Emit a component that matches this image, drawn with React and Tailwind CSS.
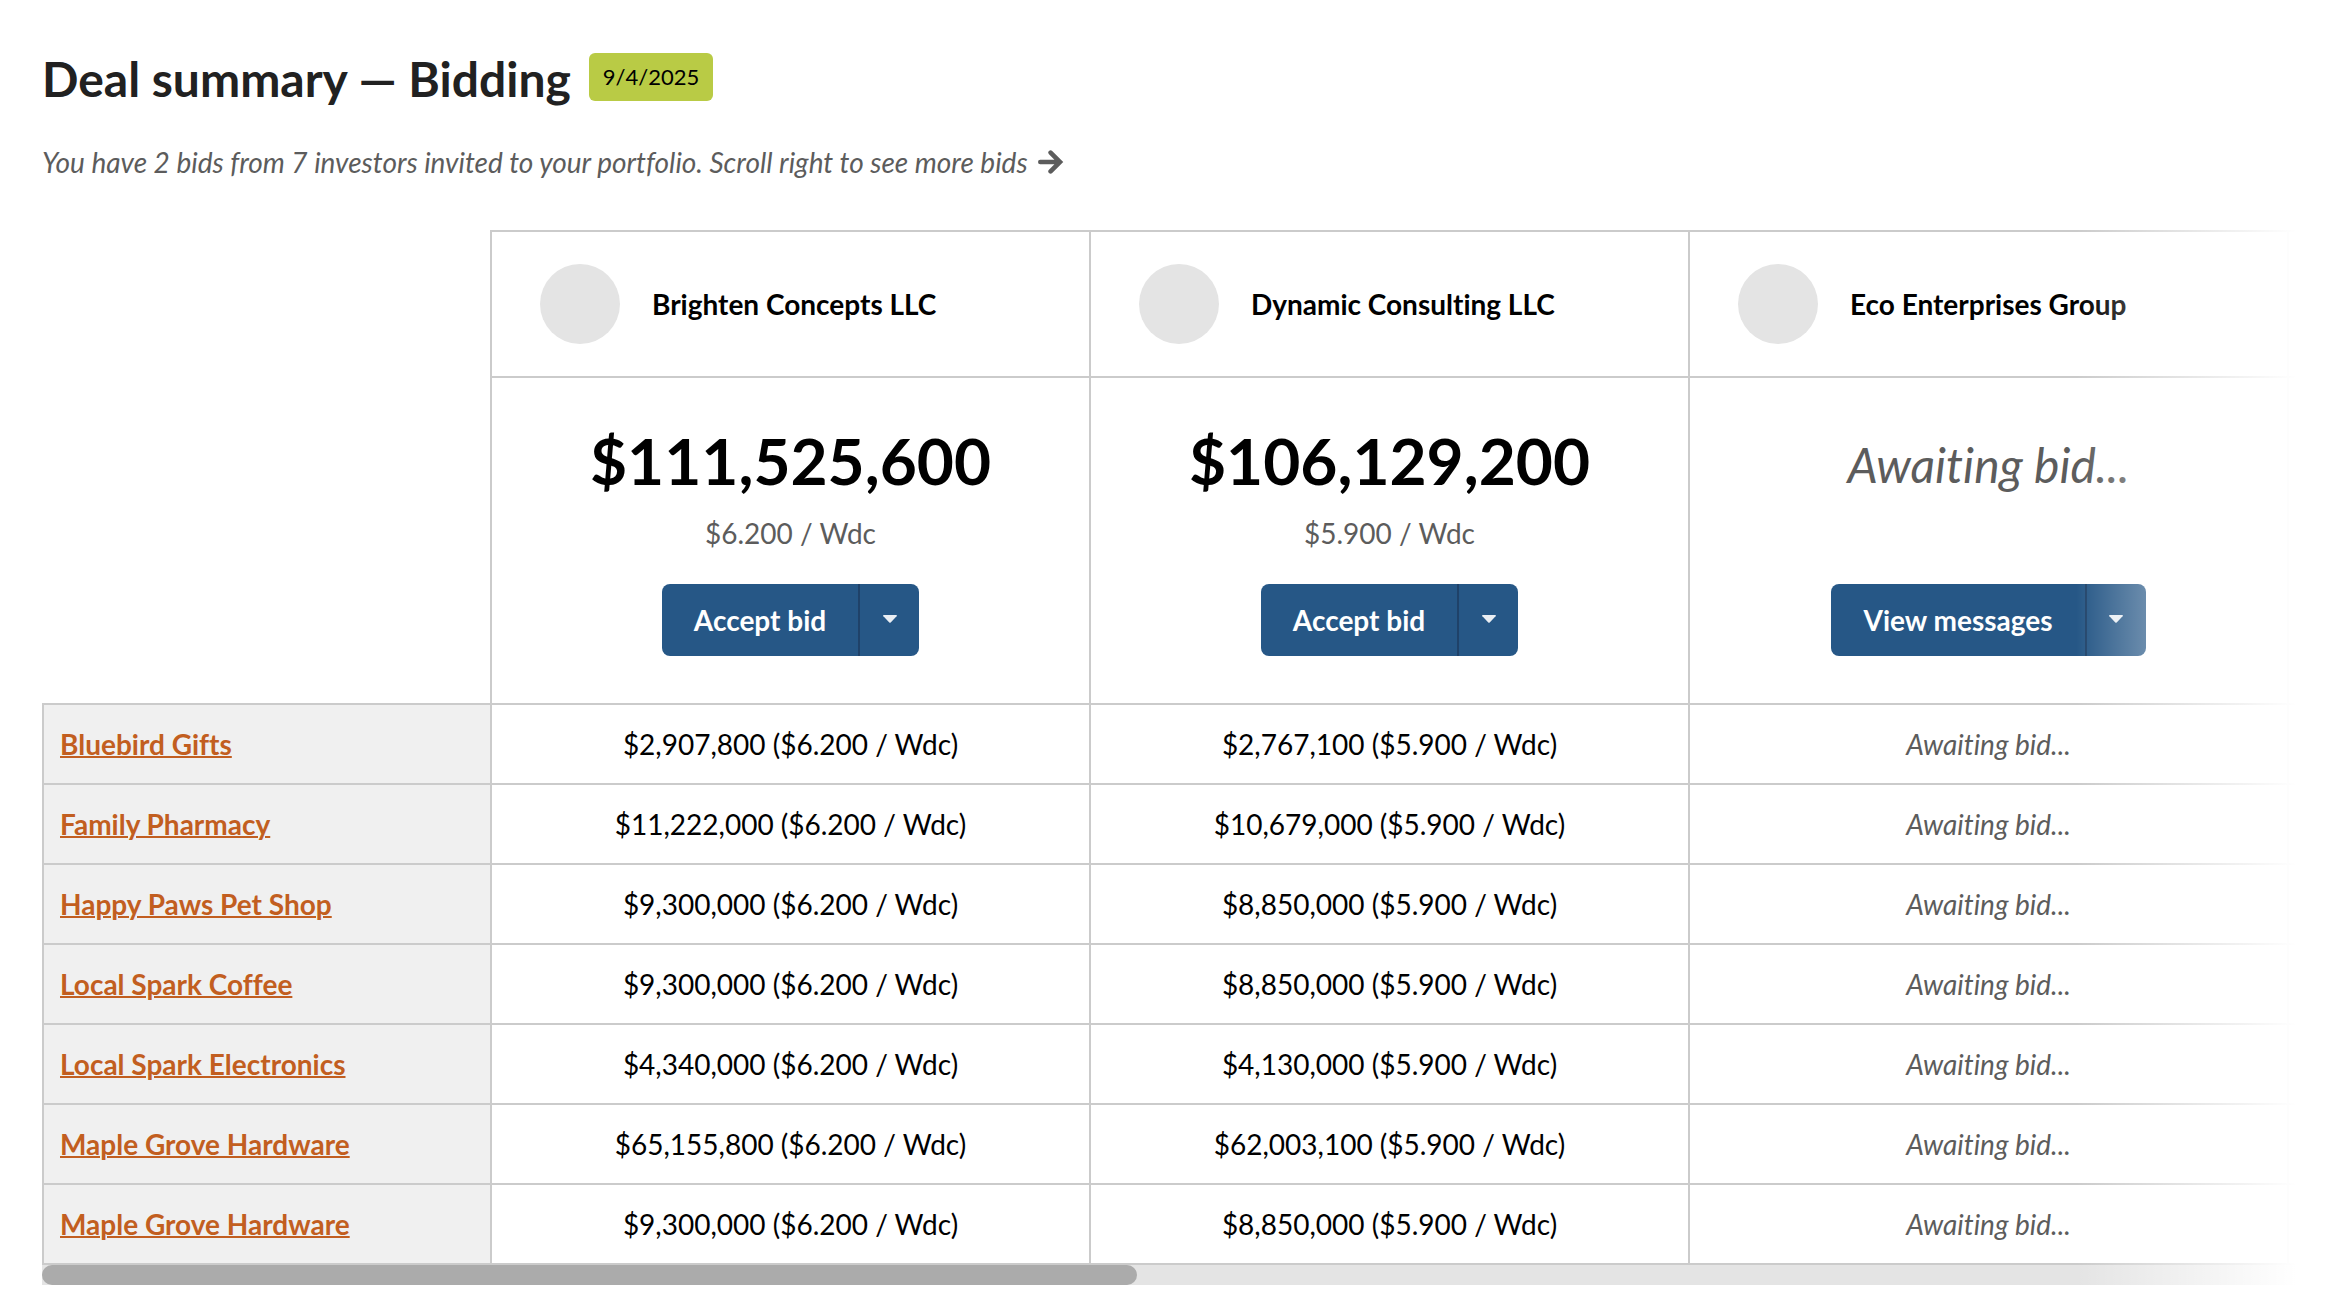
const bidders = [
  { name: "Brighten Concepts LLC", total: "$111,525,600", rate: "$6.200 / Wdc", action: "Accept bid" },
  { name: "Dynamic Consulting LLC", total: "$106,129,200", rate: "$5.900 / Wdc", action: "Accept bid" },
  { name: "Eco Enterprises Group", total: null, rate: null, action: "View messages" },
];

const projects = [
  { name: "Bluebird Gifts", bids: ["$2,907,800 ($6.200 / Wdc)", "$2,767,100 ($5.900 / Wdc)", null] },
  { name: "Family Pharmacy", bids: ["$11,222,000 ($6.200 / Wdc)", "$10,679,000 ($5.900 / Wdc)", null] },
  { name: "Happy Paws Pet Shop", bids: ["$9,300,000 ($6.200 / Wdc)", "$8,850,000 ($5.900 / Wdc)", null] },
  { name: "Local Spark Coffee", bids: ["$9,300,000 ($6.200 / Wdc)", "$8,850,000 ($5.900 / Wdc)", null] },
  { name: "Local Spark Electronics", bids: ["$4,340,000 ($6.200 / Wdc)", "$4,130,000 ($5.900 / Wdc)", null] },
  { name: "Maple Grove Hardware", bids: ["$65,155,800 ($6.200 / Wdc)", "$62,003,100 ($5.900 / Wdc)", null] },
  { name: "Maple Grove Hardware", bids: ["$9,300,000 ($6.200 / Wdc)", "$8,850,000 ($5.900 / Wdc)", null] },
];

const line = "border-2 border-[#cbcbcb]";

function ArrowRightIcon() {
  return (
    <svg
      viewBox="0 0 26 24"
      aria-hidden="true"
      className="h-6 w-[26px] fill-none stroke-current"
      strokeWidth="4.6"
      strokeLinecap="round"
    >
      <path d="M2.3 12H21M12.6 2.6L22 12L12.6 21.4" />
    </svg>
  );
}

function CaretIcon() {
  return (
    <svg viewBox="0 0 14 8" aria-hidden="true" className="mb-0.5 h-2 w-3.5 fill-[#e9eef3]">
      <path d="M.6 0H13.4Q14.3 .4 13.6 1.2L7.7 7.5Q7 8.2 6.3 7.5L.4 1.2Q-.3 .4 .6 0Z" />
    </svg>
  );
}

function SplitButton({ label }) {
  return (
    <div className="inline-flex h-[72px] overflow-hidden rounded-lg bg-[#265786] text-white">
      <button type="button" className="px-8 font-bold">
        {label}
      </button>
      <button
        type="button"
        aria-label={`More actions: ${label}`}
        className="flex w-[61px] items-center justify-center border-l-2 border-[#1f4269]"
      >
        <CaretIcon />
      </button>
    </div>
  );
}

function BidSummary({ total, rate, action }) {
  return (
    <div className="flex h-[325px] flex-col items-center pt-[41px]">
      <div className="flex h-[153px] w-full flex-col items-center">
        {total ? (
          <>
            <p className="text-[64px] leading-[84px] font-bold">{total}</p>
            <p className="mt-2.5 text-[28px] leading-[40px] text-[#5c5c5c]">{rate}</p>
          </>
        ) : (
          <p className="text-[48px] leading-[92px] text-[#5c5c5c] italic">Awaiting bid...</p>
        )}
      </div>
      <div className="mt-3">
        <SplitButton label={action} />
      </div>
    </div>
  );
}

export default function App() {
  return (
    <main className="min-h-screen bg-white px-[42px] pt-[41px] font-['Lato',sans-serif] text-[28px] leading-[40px] text-black [font-variant-ligatures:no-common-ligatures]">
      <header className="flex items-center gap-[18px]">
        <h1 className="text-[48px] leading-[76px] font-bold text-[#212121]">Deal summary — Bidding</h1>
        <span className="mb-1 rounded-md bg-[#b9cb45] px-3.5 text-[22px] leading-[48px]">9/4/2025</span>
      </header>

      <p className="mt-[25px] flex items-center gap-2.5 text-[#5c5c5c] italic">
        You have 2 bids from 7 investors invited to your portfolio. Scroll right to see more bids
        <ArrowRightIcon />
      </p>

      <section className="relative mt-12">
        <div className="overflow-hidden">
          <table className="w-full table-fixed border-collapse">
            <colgroup>
              <col className="w-[448px]" />
              <col />
              <col />
              <col />
              <col className="w-[8px]" />
            </colgroup>
            <thead>
              <tr>
                <td rowSpan={2} />
                {bidders.map((b) => (
                  <th key={b.name} scope="col" className={`${line} p-0 text-left font-bold`}>
                    <div className="flex h-[144px] items-center gap-8 pl-12">
                      <span className="size-20 rounded-full bg-[#e4e4e4]" />
                      {b.name}
                    </div>
                  </th>
                ))}
                <td className={`${line} border-r-0`} />
              </tr>
              <tr>
                {bidders.map((b) => (
                  <td key={b.name} className={`${line} p-0`}>
                    <BidSummary {...b} />
                  </td>
                ))}
                <td className={`${line} border-r-0`} />
              </tr>
            </thead>
            <tbody>
              {projects.map((p, i) => (
                <tr key={i}>
                  <th scope="row" className={`${line} bg-[#f0f0f0] px-4 py-[19px] text-left font-bold`}>
                    <a href="#" className="text-[#c25e20] underline decoration-2">
                      {p.name}
                    </a>
                  </th>
                  {p.bids.map((bid, j) => (
                    <td key={j} className={`${line} py-[19px] text-center`}>
                      {bid ?? <span className="text-[#5c5c5c] italic">Awaiting bid...</span>}
                    </td>
                  ))}
                  <td className={`${line} border-r-0`} />
                </tr>
              ))}
            </tbody>
          </table>
        </div>
        <div className="h-5 bg-[#e4e4e4]">
          <div className="h-5 w-[48.6%] rounded-full bg-[#ababab]" />
        </div>
        <div className="pointer-events-none absolute inset-y-0 right-0 w-[220px] bg-gradient-to-r from-white/0 to-white" />
      </section>
    </main>
  );
}
